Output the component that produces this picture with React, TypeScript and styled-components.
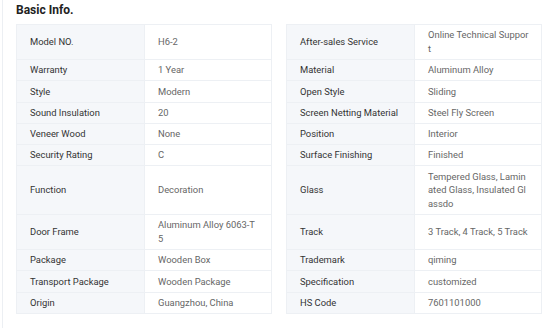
import React from "react";
import styled, { createGlobalStyle } from "styled-components";

const GlobalStyle = createGlobalStyle`
  body {
    margin: 0;
    background: #ffffff;
    font-family: Roboto, "Liberation Sans", Arial, sans-serif;
  }
`;

type Pair = [string, string];

const rows: [Pair, Pair][] = [
  [["Model NO.", "H6-2"], ["After-sales Service", "Online Technical Support"]],
  [["Warranty", "1 Year"], ["Material", "Aluminum Alloy"]],
  [["Style", "Modern"], ["Open Style", "Sliding"]],
  [["Sound Insulation", "20"], ["Screen Netting Material", "Steel Fly Screen"]],
  [["Veneer Wood", "None"], ["Position", "Interior"]],
  [["Security Rating", "C"], ["Surface Finishing", "Finished"]],
  [["Function", "Decoration"], ["Glass", "Tempered Glass, Laminated Glass, Insulated Glassdo"]],
  [["Door Frame", "Aluminum Alloy 6063-T5"], ["Track", "3 Track, 4 Track, 5 Track"]],
  [["Package", "Wooden Box"], ["Trademark", "qiming"]],
  [["Transport Package", "Wooden Package"], ["Specification", "customized"]],
  [["Origin", "Guangzhou, China"], ["HS Code", "7601101000"]],
];

function App() {
  return (
    <>
      <GlobalStyle />
      <StyledWrap>
        <StyledTitle>Basic Info.</StyledTitle>
        <StyledTable>
          {rows.map((row, i) => (
            <StyledRow key={i} first={i === 0}>
              {row.map(([label, value]) => (
                <StyledPair key={label}>
                  <StyledLabel>{label}</StyledLabel>
                  <StyledValue>{value}</StyledValue>
                </StyledPair>
              ))}
            </StyledRow>
          ))}
        </StyledTable>
      </StyledWrap>
    </>
  );
}

const StyledWrap = styled.div`
  margin-left: 2px;
  border-left: 1px solid #eceff3;
  padding: 2px 0 14px 13px;
  min-height: 312px;
`;
const StyledTitle = styled.h3`
  margin: 0 0 6px;
  font-size: 12px;
  line-height: 16px;
  font-weight: bold;
  color: #222;
`;
const StyledTable = styled.div`
  display: flex;
  flex-direction: column;
  width: 526px;
`;
const StyledRow = styled.div<{ first?: boolean }>`
  display: flex;
  gap: 14px;
  & > div {
    border-top: ${(p) => (p.first ? "1px solid #edf0f4" : "none")};
  }
`;
const StyledPair = styled.div`
  box-sizing: border-box;
  width: 256px;
  display: grid;
  grid-template-columns: 128px 1fr;
  border-left: 1px solid #edf0f4;
  border-right: 1px solid #edf0f4;
  border-bottom: 1px solid #edf0f4;
`;
const StyledLabel = styled.div`
  background: #f5f7fa;
  border-right: 1px solid #edf0f4;
  padding: 3.3px 8px 3.3px 13px;
  font-size: 9.4px;
  line-height: 13.7px;
  color: #333;
  display: flex;
  align-items: center;
`;
const StyledValue = styled.div`
  padding: 3.3px 11.5px 3.3px 13px;
  font-size: 9.4px;
  line-height: 13.7px;
  color: #666;
  word-break: break-all;
  display: flex;
  align-items: center;
`;

export default App;
